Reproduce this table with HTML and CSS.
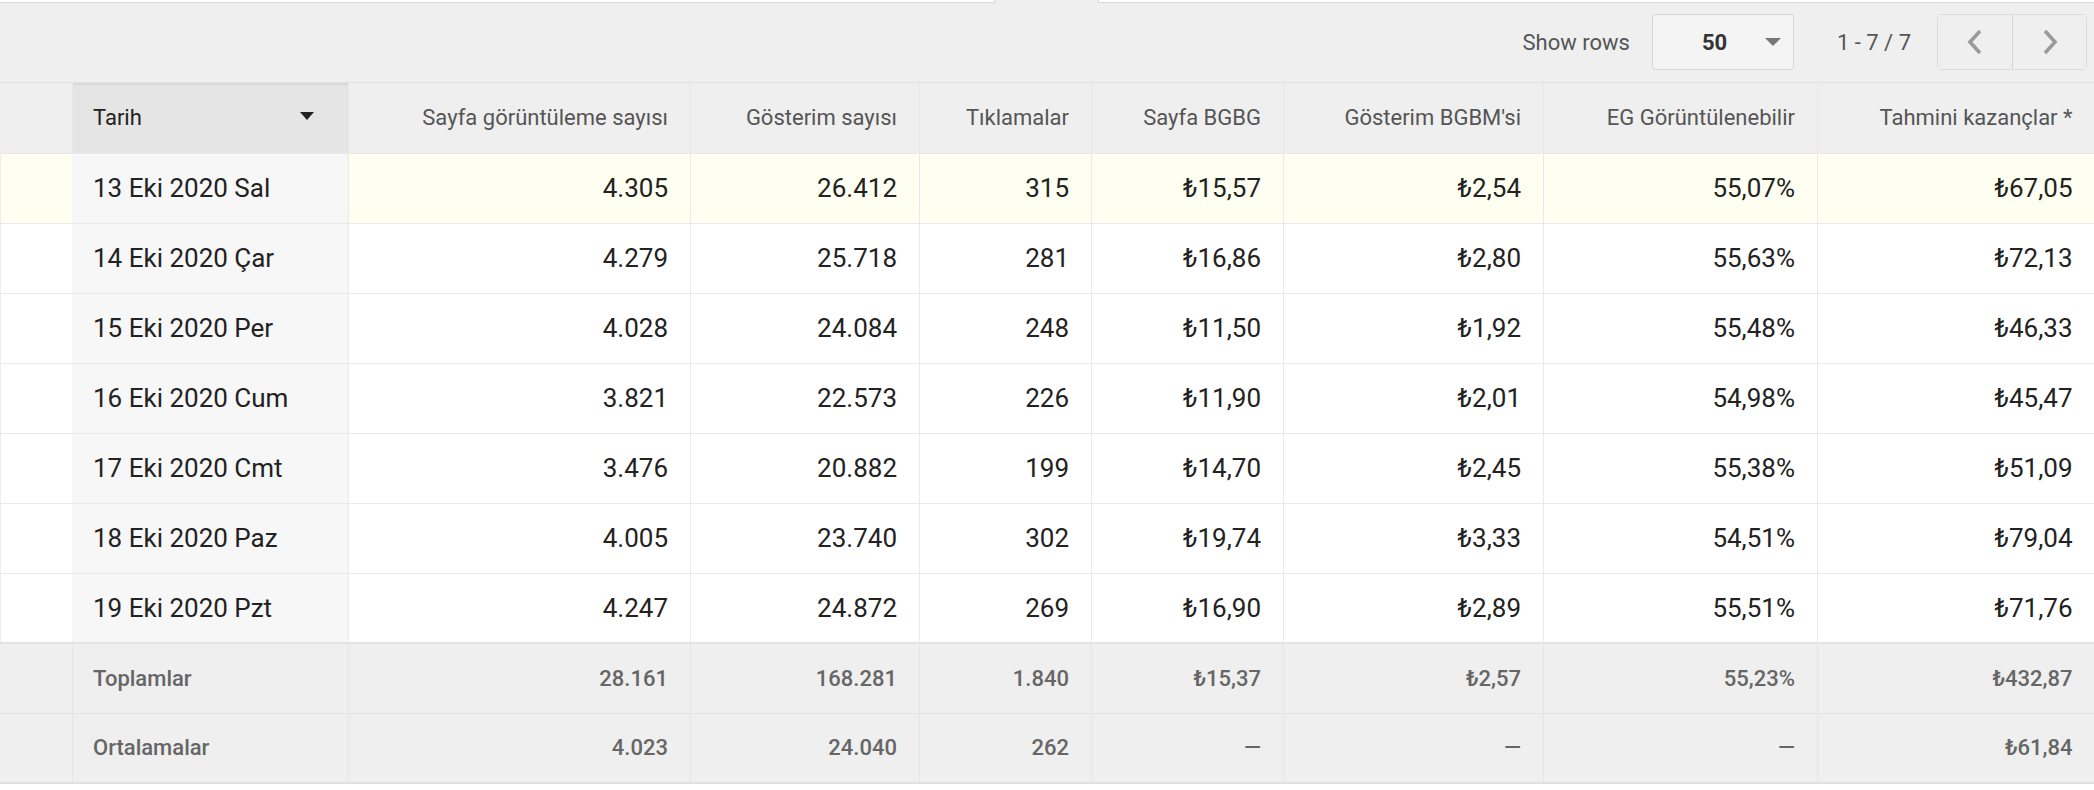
FILE: index.html
```html
<!DOCTYPE html>
<html lang="tr">
<head>
<meta charset="utf-8">
<title>Rapor</title>
<link rel="stylesheet" href="styles.css">
</head>
<body>
<div class="toolbar">
  <div class="tabs">
    <div class="tab-left"></div>
    <div class="tab-active"></div>
    <div class="tab-right"></div>
  </div>
  <div class="controls">
    <span class="label">Show rows</span>
    <div class="select">
      <span class="select-value">50</span>
      <span class="select-arrow"></span>
    </div>
    <span class="range">1 - 7 / 7</span>
    <div class="pager">
      <button class="pager-btn" type="button" aria-label="Önceki">
        <svg width="16" height="26" viewBox="0 0 16 26"><polyline points="13,2 3,13 13,24" fill="none" stroke="#9a9a9a" stroke-width="3.6"/></svg>
      </button>
      <button class="pager-btn" type="button" aria-label="Sonraki">
        <svg width="16" height="26" viewBox="0 0 16 26"><polyline points="3,2 13,13 3,24" fill="none" stroke="#9a9a9a" stroke-width="3.6"/></svg>
      </button>
    </div>
  </div>
</div>

<table class="report">
  <colgroup>
    <col class="c0"><col class="c1"><col class="c2"><col class="c3"><col class="c4"><col class="c5"><col class="c6"><col class="c7"><col class="c8">
  </colgroup>
  <thead>
    <tr>
      <th class="blank"></th>
      <th class="date sorted"><span class="th-inner">Tarih<span class="sort-arrow"></span></span></th>
      <th>Sayfa görüntüleme sayısı</th>
      <th>Gösterim sayısı</th>
      <th>Tıklamalar</th>
      <th>Sayfa BGBG</th>
      <th>Gösterim BGBM'si</th>
      <th>EG Görüntülenebilir</th>
      <th>Tahmini kazançlar *</th>
    </tr>
  </thead>
  <tbody>
    <tr class="highlight">
      <td class="blank"></td><td class="date">13 Eki 2020 Sal</td><td>4.305</td><td>26.412</td><td>315</td><td>₺15,57</td><td>₺2,54</td><td>55,07%</td><td>₺67,05</td>
    </tr>
    <tr>
      <td class="blank"></td><td class="date">14 Eki 2020 Çar</td><td>4.279</td><td>25.718</td><td>281</td><td>₺16,86</td><td>₺2,80</td><td>55,63%</td><td>₺72,13</td>
    </tr>
    <tr>
      <td class="blank"></td><td class="date">15 Eki 2020 Per</td><td>4.028</td><td>24.084</td><td>248</td><td>₺11,50</td><td>₺1,92</td><td>55,48%</td><td>₺46,33</td>
    </tr>
    <tr>
      <td class="blank"></td><td class="date">16 Eki 2020 Cum</td><td>3.821</td><td>22.573</td><td>226</td><td>₺11,90</td><td>₺2,01</td><td>54,98%</td><td>₺45,47</td>
    </tr>
    <tr>
      <td class="blank"></td><td class="date">17 Eki 2020 Cmt</td><td>3.476</td><td>20.882</td><td>199</td><td>₺14,70</td><td>₺2,45</td><td>55,38%</td><td>₺51,09</td>
    </tr>
    <tr>
      <td class="blank"></td><td class="date">18 Eki 2020 Paz</td><td>4.005</td><td>23.740</td><td>302</td><td>₺19,74</td><td>₺3,33</td><td>54,51%</td><td>₺79,04</td>
    </tr>
    <tr>
      <td class="blank"></td><td class="date">19 Eki 2020 Pzt</td><td>4.247</td><td>24.872</td><td>269</td><td>₺16,90</td><td>₺2,89</td><td>55,51%</td><td>₺71,76</td>
    </tr>
  </tbody>
  <tfoot>
    <tr class="totals">
      <td class="blank"></td><td class="date">Toplamlar</td><td>28.161</td><td>168.281</td><td>1.840</td><td>₺15,37</td><td>₺2,57</td><td>55,23%</td><td>₺432,87</td>
    </tr>
    <tr class="averages">
      <td class="blank"></td><td class="date">Ortalamalar</td><td>4.023</td><td>24.040</td><td>262</td><td class="dash">—</td><td class="dash">—</td><td class="dash">—</td><td>₺61,84</td>
    </tr>
  </tfoot>
</table>
</body>
</html>
```

FILE: styles.css
```css
html, body {
  margin: 0;
  padding: 0;
  background: #ffffff;
  font-family: Roboto, "Liberation Sans", "DejaVu Sans", sans-serif;
  color: #222;
}

/* ---------- toolbar ---------- */
.toolbar {
  background: #efefef;
  border-bottom: 1px solid #e2e2e2;
  height: 82px;
  display: flex;
  flex-direction: column;
}

.tabs {
  display: flex;
  height: 3px;
}
.tab-left {
  width: 995px;
  background: #fff;
  border-bottom: 1px solid #d9d9d9;
  border-right: 1px solid #d9d9d9;
  box-sizing: border-box;
}
.tab-active {
  width: 103px;
}
.tab-right {
  flex: 1;
  background: #fff;
  border-bottom: 1px solid #d9d9d9;
  border-left: 1px solid #d9d9d9;
  box-sizing: border-box;
}

.controls {
  flex: 1;
  display: flex;
  align-items: center;
  justify-content: flex-end;
  padding-right: 7px;
  padding-bottom: 1px;
}

.label {
  font-size: 22px;
  color: #555;
  margin-right: 22px;
}

.select {
  width: 142px;
  height: 56px;
  box-sizing: border-box;
  border: 1px solid #d6d6d6;
  border-radius: 3px;
  background: #f4f4f4;
  display: flex;
  align-items: center;
  position: relative;
}
.select-value {
  font-size: 22px;
  font-weight: 700;
  color: #333;
  margin-left: 49px;
}
.select-arrow {
  margin-left: auto;
  margin-right: 12px;
  width: 0;
  height: 0;
  border-left: 8px solid transparent;
  border-right: 8px solid transparent;
  border-top: 8px solid #777;
}

.range {
  font-size: 22px;
  color: #555;
  margin-left: 43px;
  margin-right: 26px;
}

.pager {
  display: flex;
  height: 56px;
  border: 1px solid #dcdcdc;
  border-radius: 4px;
  box-sizing: border-box;
}
.pager-btn {
  width: 74px;
  height: 100%;
  background: #efefef;
  border: none;
  padding: 0;
  display: flex;
  align-items: center;
  justify-content: center;
}
.pager-btn + .pager-btn {
  border-left: 1px solid #d4d4d4;
}

/* ---------- table ---------- */
.report {
  width: 2094px;
  table-layout: fixed;
  border-collapse: collapse;
  border-bottom: 2px solid #e0e0e0;
}

.c0 { width: 72px; }
.c1 { width: 276px; }
.c2 { width: 342px; }
.c3 { width: 229px; }
.c4 { width: 172px; }
.c5 { width: 192px; }
.c6 { width: 260px; }
.c7 { width: 274px; }
.c8 { width: 277px; }

.report th,
.report td {
  height: 70px;
  padding: 0 22px 0 20px;
  text-align: right;
  white-space: nowrap;
  border-left: 1px solid #e9e9e9;
  border-bottom: 1px solid #e9e9e9;
  box-sizing: border-box;
}

.report th {
  background: #efefef;
  font-size: 22px;
  font-weight: 400;
  color: #555;
}
.report th.sorted {
  background: #e5e5e5;
  color: #222;
  box-shadow: inset 0 2px 2px rgba(0, 0, 0, 0.06);
}
.th-inner {
  display: flex;
  align-items: center;
  justify-content: space-between;
  padding-right: 12px;
}
.sort-arrow {
  width: 0;
  height: 0;
  border-left: 7px solid transparent;
  border-right: 7px solid transparent;
  border-top: 8px solid #222;
  margin-top: -3px;
}

.report td {
  font-size: 26px;
  color: #222;
  background: #fff;
}
.report .blank {
  padding: 0;
  border-left: 1px solid #eeeeee;
}
.report th.blank {
  border-left-color: #efefef;
}
.report .date {
  text-align: left;
  padding-left: 20px;
}
.report td.date {
  background: #f7f7f7;
  border-left-color: #f7f7f7;
}

.report tr.highlight td {
  background: #fefff0;
}
.report tr.highlight td.date {
  background: #f7f7f7;
}

.report tfoot td,
.report tfoot td.date {
  background: #efefef;
  font-size: 22px;
  font-weight: 500;
  color: #666;
  border-left-color: #e6e6e6;
  border-bottom-color: #e3e3e3;
}
.report tfoot td.blank {
  border-left-color: #efefef;
}
.report tr.totals td {
  border-top: 2px solid #e3e3e3;
}
.report td.dash {
  color: #666;
}
```
